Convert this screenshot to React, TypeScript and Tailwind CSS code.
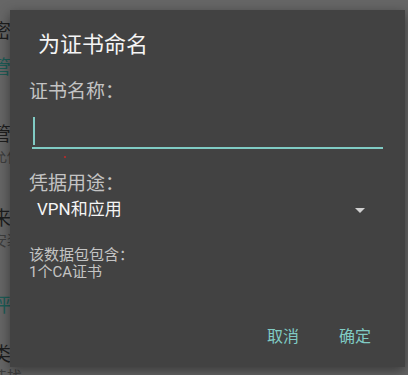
import React from 'react';

const font = { fontFamily: 'Roboto, "Noto Sans CJK SC", "Noto Sans", sans-serif' };

function BackgroundPage() {
  // dimmed settings list behind the dialog, only its left edge shows
  return (
    <div className="flex flex-col -ml-[8px] pt-[22px] text-[19px] leading-none">
      <p className="text-[#1e1e1e]">密码</p>
      <p className="mt-[17px] text-[#1d5c56]">管理</p>
      <p className="mt-[48px] text-[#1e1e1e]">管理</p>
      <p className="mt-[6px] text-[15px] text-[#3e3e3e]">允你</p>
      <p className="mt-[44px] text-[#1e1e1e]">来源</p>
      <p className="mt-[6px] text-[15px] text-[#3e3e3e]">安装</p>
      <p className="mt-[47px] text-[#1d5c56]">评估</p>
      <p className="mt-[30px] text-[#1e1e1e]">类型</p>
      <p className="mt-[6px] text-[15px] text-[#3e3e3e]">选找</p>
    </div>
  );
}

export default function App() {
  return (
    <div className="relative w-[408px] h-[375px] overflow-hidden bg-[#666666]" style={font}>
      <BackgroundPage />

      <div className="absolute left-[10px] top-[10px] w-[395px] h-[357px] bg-[#424242] shadow-[0_4px_12px_rgba(0,0,0,0.45)] flex flex-col">
        <h2 className="pl-[28px] pt-[24px] text-[22px] leading-none text-[#f5f5f5]">为证书命名</h2>

        <div className="pl-[19px] flex flex-col">
          <label className="mt-[26px] text-[19px] leading-none text-[#c4c4c4]">证书名称：</label>

          <div className="relative ml-[3px] w-[351px]">
            <div className="mt-[16px] ml-[1px] w-[2px] h-[28px] bg-[#80cbc4]" />
            <div className="mt-[2px] h-[2px] bg-[#80cbc4]" />
            <div className="absolute left-[32px] top-[55px] w-[2px] h-[2px] rounded-full bg-[#c62828]" />
          </div>

          <label className="mt-[25px] text-[19px] leading-none text-[#c4c4c4]">凭据用途：</label>

          <div className="mt-[8px] flex items-center pl-[8px] w-[336px] h-[17px]">
            <span className="text-[17px] leading-none text-[#f5f5f5]">VPN和应用</span>
            <svg className="ml-auto mt-[2px]" width="10" height="5" viewBox="0 0 10 5">
              <path d="M0 0h10L5 5z" fill="#d0d0d0" />
            </svg>
          </div>

          <div className="mt-[29px] text-[15px] leading-[17px] text-[#c4c4c4]">
            <p>该数据包包含：</p>
            <p>1个CA证书</p>
          </div>
        </div>

        <div className="mt-auto pb-[22px] pr-[34px] flex justify-end gap-[40px] text-[16px] leading-none text-[#80cbc4]">
          <button>取消</button>
          <button>确定</button>
        </div>
      </div>
    </div>
  );
}
